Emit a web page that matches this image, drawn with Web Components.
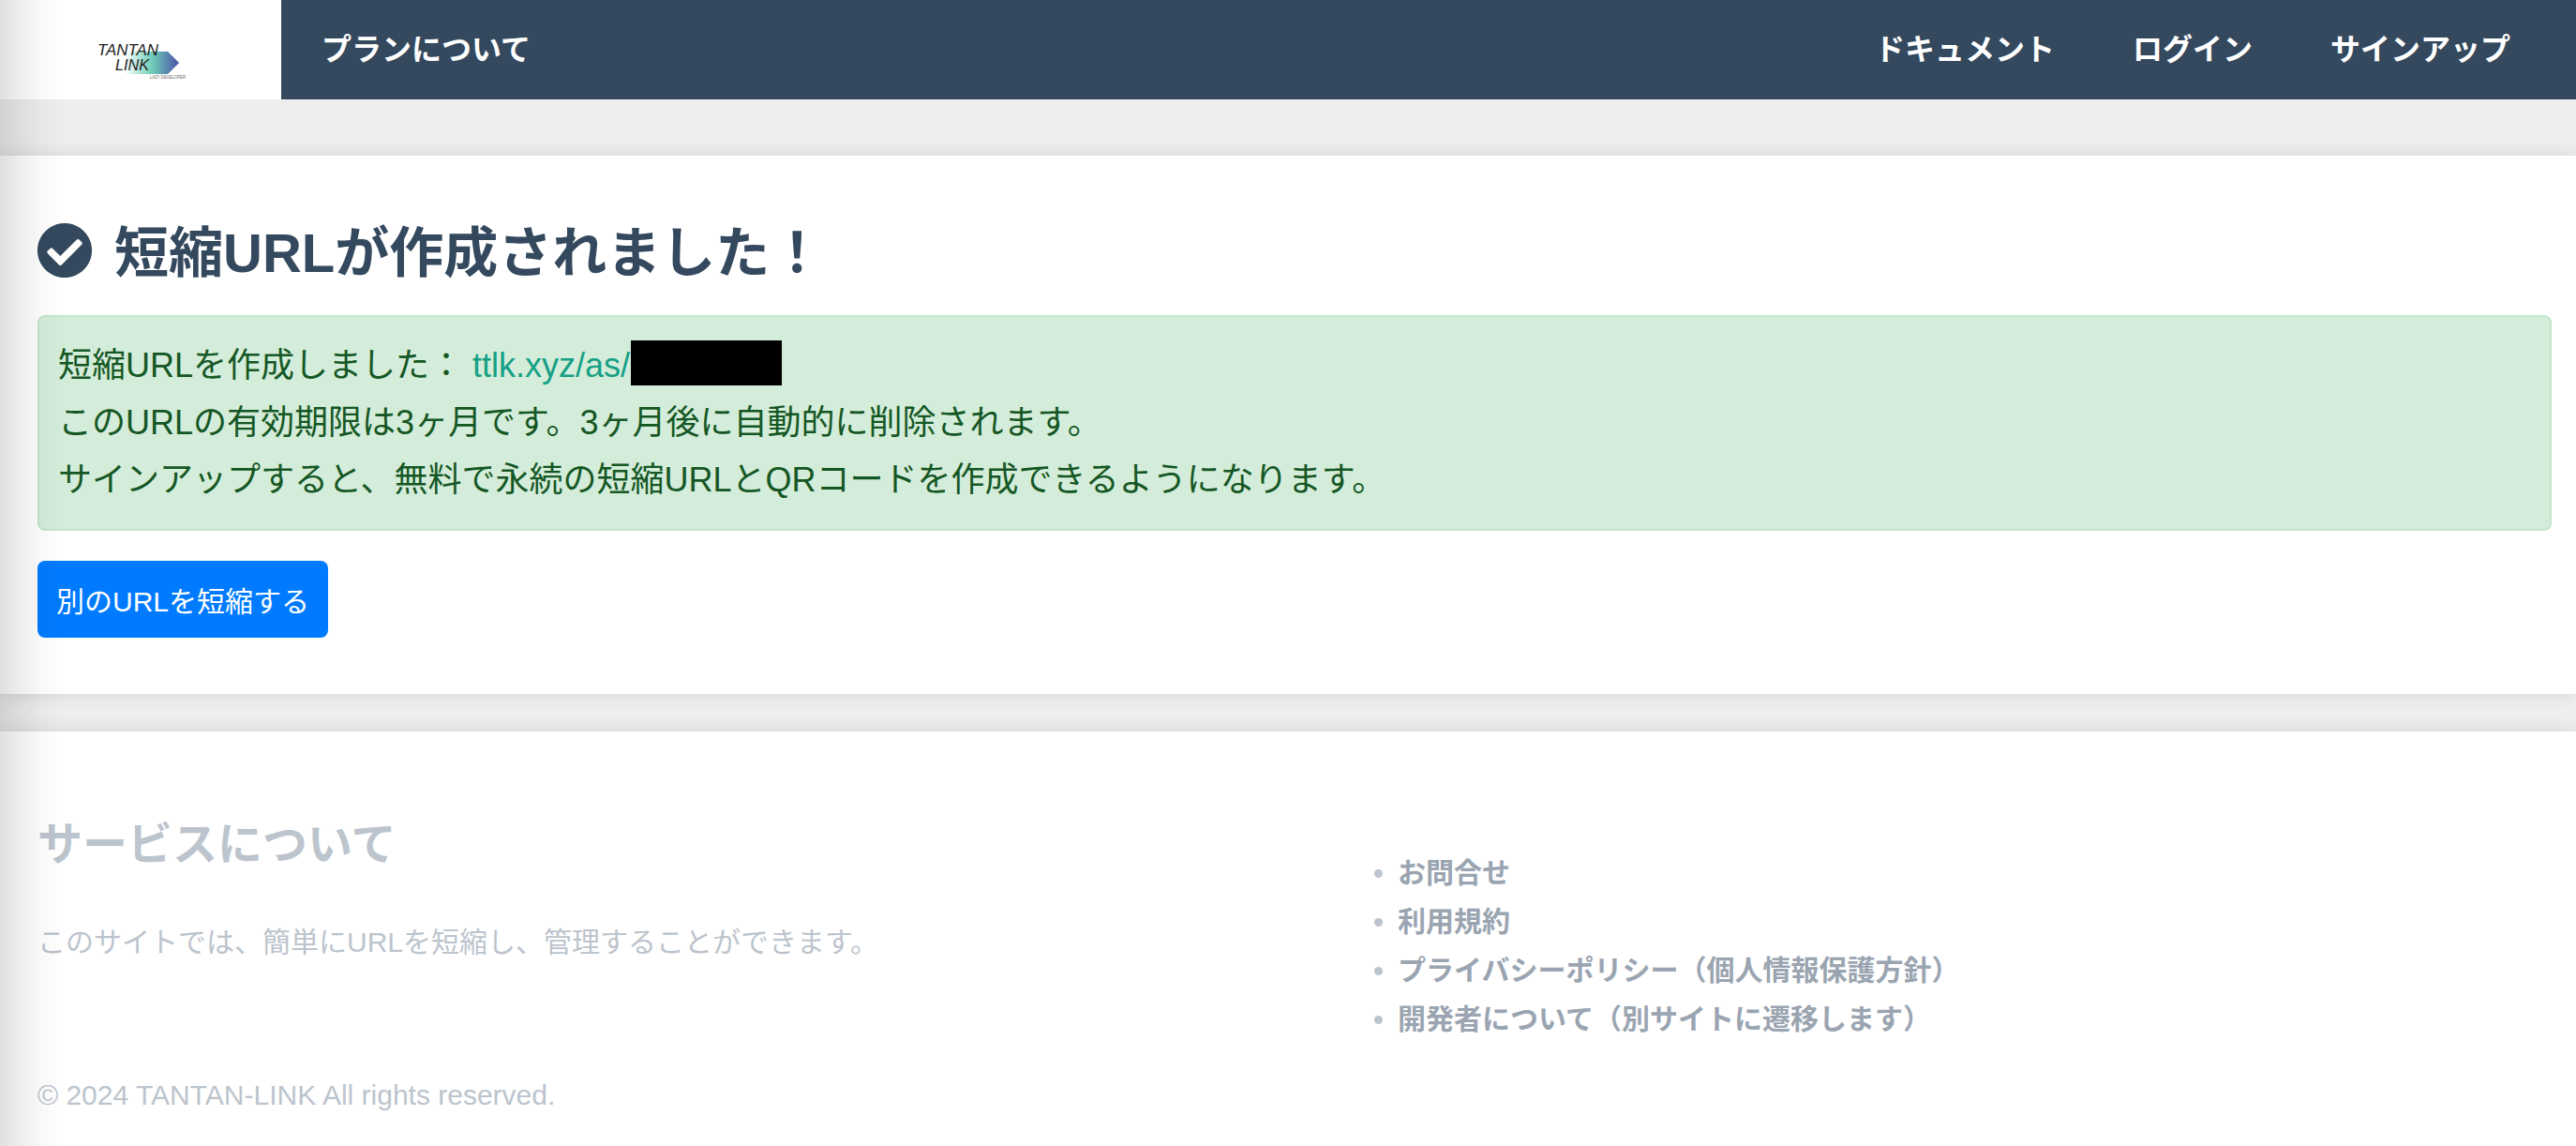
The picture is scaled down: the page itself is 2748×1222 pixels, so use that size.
<!DOCTYPE html>
<html lang="ja">
<head>
<meta charset="utf-8">
<title>TANTAN-LINK</title>
<style>
  html, body { margin: 0; height: 100%; }
  body {
    background: #eeeeee;
    font-family: "Liberation Sans", "Noto Sans CJK JP", sans-serif;
    display: flex;
    flex-direction: column;
    min-height: 100vh;
    overflow: hidden;
  }
</style>
</head>
<body>
<edge-shade></edge-shade>
<top-nav>
  <nav-link slot="left">プランについて</nav-link>
  <nav-link>ドキュメント</nav-link>
  <nav-link>ログイン</nav-link>
  <nav-link>サインアップ</nav-link>
</top-nav>
<result-panel heading="短縮URLが作成されました！">
  <notice-box>
    <div>短縮URLを作成しました： <short-url>ttlk.xyz/as/</short-url></div>
    <div>このURLの有効期限は3ヶ月です。3ヶ月後に自動的に削除されます。</div>
    <div>サインアップすると、無料で永続の短縮URLとQRコードを作成できるようになります。</div>
  </notice-box>
  <primary-button>別のURLを短縮する</primary-button>
</result-panel>
<site-footer>
  <span slot="title">サービスについて</span>
  <span slot="text">このサイトでは、簡単にURLを短縮し、管理することができます。</span>
  <footer-link slot="links">お問合せ</footer-link>
  <footer-link slot="links">利用規約</footer-link>
  <footer-link slot="links">プライバシーポリシー（個人情報保護方針）</footer-link>
  <footer-link slot="links">開発者について（別サイトに遷移します）</footer-link>
  <span slot="copy">© 2024 TANTAN-LINK All rights reserved.</span>
</site-footer>

<script>
function shadowOf(el, html) {
  const template = document.createElement('template');
  template.innerHTML = html;
  el.attachShadow({ mode: 'open' }).appendChild(template.content.cloneNode(true));
}

class EdgeShade extends HTMLElement {
  constructor() {
    super();
    shadowOf(this, `<style>
      :host {
        position: fixed; left: 0; top: 0; bottom: 0; width: 72px;
        pointer-events: none; z-index: 5;
        background: linear-gradient(to right, rgba(0,0,0,.12), rgba(0,0,0,.07) 20px, rgba(0,0,0,.025) 45px, rgba(0,0,0,0) 70px);
      }
    </style>`);
  }
}
customElements.define('edge-shade', EdgeShade);

class TopNav extends HTMLElement {
  constructor() {
    super();
    shadowOf(this, `<style>
      :host { display: flex; height: 106px; background: #34495e; flex: none; }
      .brand { width: 300px; background: #fff; flex: none; }
      .brand svg { display: block; }
      .left { display: flex; padding-left: 1.5px; }
      .right { display: flex; margin-left: auto; padding-right: 28.5px; }
    </style>
    <div class="brand">
      <svg width="300" height="106" viewBox="0 0 300 106">
        <defs>
          <linearGradient id="arrow" x1="0" x2="1" y1="0" y2="0">
            <stop offset="0" stop-color="#ffffff"/>
            <stop offset=".5" stop-color="#6fcdb7"/>
            <stop offset="1" stop-color="#4a52a8"/>
          </linearGradient>
        </defs>
        <polygon points="133,55 179,55 191,67 179,79 133,79" fill="url(#arrow)"/>
        <text x="104" y="59" font-family="Liberation Sans, sans-serif" font-style="italic" font-size="16.5" fill="#222" textLength="65" lengthAdjust="spacingAndGlyphs">TANTAN</text>
        <text x="123" y="75" font-family="Liberation Sans, sans-serif" font-style="italic" font-size="16.5" fill="#222" textLength="36" lengthAdjust="spacingAndGlyphs">LINK</text>
        <text x="160" y="84" font-family="Liberation Sans, sans-serif" font-size="4.6" fill="#666" textLength="38" lengthAdjust="spacingAndGlyphs">LAZY DEVELOPER</text>
      </svg>
    </div>
    <div class="left"><slot name="left"></slot></div>
    <div class="right"><slot></slot></div>`);
  }
}
customElements.define('top-nav', TopNav);

class NavLink extends HTMLElement {
  constructor() {
    super();
    shadowOf(this, `<style>
      :host {
        display: flex; align-items: center; padding: 0 41.5px 6px;
        color: #fff; font-size: 32px; font-weight: 700; white-space: nowrap;
      }
    </style><slot></slot>`);
  }
}
customElements.define('nav-link', NavLink);

class ResultPanel extends HTMLElement {
  constructor() {
    super();
    shadowOf(this, `<style>
      :host {
        display: block; flex: none; height: 574px; box-sizing: border-box;
        margin-top: 60px; padding: 60px 26px 0 40px;
        background: #fff;
        box-shadow: 0 0 18px rgba(0,0,0,.11);
        position: relative;
      }
      h1 {
        display: flex; align-items: center; gap: 23px;
        margin: 0 0 28px; height: 82px;
        color: #34495e; font-size: 58px; font-weight: 700; line-height: 82px;
      }
      svg { width: 60px; height: 60px; flex: none; margin-left: -1px; fill: #34495e; }
      #title { margin-top: 6px; }
    </style>
    <h1>
      <svg viewBox="0 0 512 512"><path d="M504 256c0 136.967-111.033 248-248 248S8 392.967 8 256 119.033 8 256 8s248 111.033 248 248zM227.314 387.314l184-184c6.248-6.248 6.248-16.379 0-22.627l-22.627-22.627c-6.248-6.249-16.379-6.249-22.628 0L216 308.118l-70.059-70.059c-6.248-6.248-16.379-6.248-22.628 0l-22.627 22.627c-6.248 6.248-6.248 16.379 0 22.627l104 104c6.249 6.249 16.379 6.249 22.628.001z"/></svg>
      <span id="title"></span>
    </h1>
    <slot></slot>`);
    this.shadowRoot.getElementById('title').textContent = this.getAttribute('heading');
  }
}
customElements.define('result-panel', ResultPanel);

class NoticeBox extends HTMLElement {
  constructor() {
    super();
    shadowOf(this, `<style>
      :host {
        display: block; box-sizing: border-box; height: 230px;
        padding: 21px 20px;
        background: #d4edda; border: 2px solid #c3e6cb; border-radius: 8px;
        color: #155724; font-size: 36px; line-height: 61px; white-space: nowrap;
      }
    </style><slot></slot>`);
  }
}
customElements.define('notice-box', NoticeBox);

class ShortUrl extends HTMLElement {
  constructor() {
    super();
    shadowOf(this, `<style>
      :host { display: inline; color: #16a085; }
      .mask {
        display: inline-block; width: 161px; height: 48px; margin-left: 1px;
        background: #000; vertical-align: -9px;
      }
    </style><slot></slot><span class="mask"></span>`);
  }
}
customElements.define('short-url', ShortUrl);

class PrimaryButton extends HTMLElement {
  constructor() {
    super();
    shadowOf(this, `<style>
      :host {
        display: flex; align-items: center; justify-content: center;
        width: 310px; height: 82px; margin-top: 32px;
        background: #007bff; border-radius: 8px;
        color: #fff; font-size: 30px; white-space: nowrap;
      }
    </style><slot></slot>`);
  }
}
customElements.define('primary-button', PrimaryButton);

class SiteFooter extends HTMLElement {
  constructor() {
    super();
    shadowOf(this, `<style>
      :host {
        display: block; flex: 1; margin-top: 40px; padding: 0 40px;
        background: #fff; box-shadow: 0 0 18px rgba(0,0,0,.11);
        position: relative; color: #bcc4cd;
      }
      .cols { display: grid; grid-template-columns: 1403px 1fr; height: 320px; }
      h3 { margin: 0; padding-top: 91px; font-size: 48px; line-height: 60px; font-weight: 700; }
      p { margin: 0; padding-top: 50px; font-size: 30px; line-height: 48px; }
      ul { margin: 0; padding: 125px 0 0 48px; color: #bcc4cd; }
      .copy { padding-top: 47px; font-size: 30px; line-height: 42px; }
    </style>
    <div class="cols">
      <div>
        <h3><slot name="title"></slot></h3>
        <p><slot name="text"></slot></p>
      </div>
      <ul><slot name="links"></slot></ul>
    </div>
    <div class="copy"><slot name="copy"></slot></div>`);
  }
}
customElements.define('site-footer', SiteFooter);

class FooterLink extends HTMLElement {
  constructor() {
    super();
    shadowOf(this, `<style>
      :host {
        display: list-item; list-style: disc;
        font-size: 30px; line-height: 52px; font-weight: 700;
      }
      span { color: #9aa5b1; }
    </style><span><slot></slot></span>`);
  }
}
customElements.define('footer-link', FooterLink);
</script>
</body>
</html>
